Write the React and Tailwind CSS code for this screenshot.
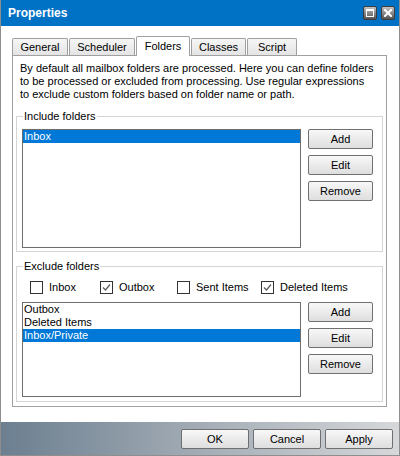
import React from 'react';

const tabs = [
  { name: "General", w: "w-[56px]" },
  { name: "Scheduler", w: "w-[66px]" },
  { name: "Folders", w: "w-[54px]", active: true },
  { name: "Classes", w: "w-[55px]" },
  { name: "Script", w: "w-[50px]" },
];

function Btn({ children, className = "" }) {
  return (
    <button className={`h-[20px] border border-[#707070] rounded-[2px] bg-linear-to-b from-[#f8f8f8] to-[#dedede] text-[11px] leading-none text-black ${className}`}>
      {children}
    </button>
  );
}

function TitleButton({ kind }) {
  return (
    <div className="w-[14px] h-[14px] rounded-[2px] border border-[#3c3c3c] bg-linear-to-b from-[#c4c4c4] via-[#8a8a8a] to-[#555555] flex items-center justify-center">
      {kind === "max" ? (
        <svg width="8" height="8" viewBox="0 0 8 8">
          <rect x="0.5" y="0.5" width="7" height="7" fill="none" stroke="white" strokeWidth="1" />
          <rect x="0" y="0" width="8" height="2" fill="white" />
        </svg>
      ) : (
        <svg width="8" height="8" viewBox="0 0 8 8">
          <path d="M1 1 L7 7 M7 1 L1 7" stroke="white" strokeWidth="2" strokeLinecap="square" />
        </svg>
      )}
    </div>
  );
}

function Check({ checked, label, className = "" }) {
  return (
    <div className={`flex items-center gap-[6px] ${className}`}>
      <span className="w-[13px] h-[13px] border border-[#333333] bg-white flex items-center justify-center">
        {checked && (
          <svg width="11" height="11" viewBox="0 0 11 11">
            <path d="M2 5.5 L4.5 8 L9 2.5" fill="none" stroke="#5a5a5a" strokeWidth="1.2" />
          </svg>
        )}
      </span>
      <span className="leading-[13px]">{label}</span>
    </div>
  );
}

function ListBox({ items, selected, className = "" }) {
  return (
    <div className={`w-[279px] border border-[#6e6e6e] bg-white ${className}`}>
      {items.map((it) => (
        <div
          key={it}
          className={`h-[13px] leading-[13px] pl-[1px] ${it === selected ? "bg-[#0078d7] text-white" : "text-black"}`}
        >
          {it}
        </div>
      ))}
    </div>
  );
}

function Group({ title, className = "", children }) {
  return (
    <div className={`relative mx-[3px] border border-[#d5d5d5] ${className}`}>
      <span className="absolute left-[6px] top-[-7px] bg-white px-[1px] leading-[13px]">{title}</span>
      {children}
    </div>
  );
}

function SideButtons() {
  return (
    <div className="flex flex-col gap-[6px]">
      <Btn className="w-[65px]">Add</Btn>
      <Btn className="w-[65px]">Edit</Btn>
      <Btn className="w-[65px]">Remove</Btn>
    </div>
  );
}

export default function App() {
  return (
    <div className="w-[400px] h-[456px] flex flex-col bg-white border-x border-b border-[#8e8e8e] font-['Liberation_Sans',Arial,sans-serif] text-[11px] text-black">
      <div className="h-[26px] shrink-0 bg-[#0072c6] flex items-center justify-between pl-[7px] pr-[4px]">
        <span className="text-white font-bold text-[12px]">Properties</span>
        <div className="flex gap-[4px]">
          <TitleButton kind="max" />
          <TitleButton kind="close" />
        </div>
      </div>

      <div className="flex-1 pl-[11px] pr-[12px] pt-[10px]">
        <div className="flex items-end gap-[1px] h-[19px]">
          {tabs.map((t) =>
            t.active ? (
              <div
                key={t.name}
                className={`${t.w} h-[20px] -mb-[1px] relative z-10 bg-white border-x border-t border-[#a0a0a0] rounded-t-[2px] flex items-center justify-center pb-[1px]`}
              >
                {t.name}
              </div>
            ) : (
              <div
                key={t.name}
                className={`${t.w} h-[17px] bg-linear-to-b from-[#f6f6f6] to-[#e4e4e4] border-x border-t border-[#a0a0a0] rounded-t-[2px] flex items-center justify-center`}
              >
                {t.name}
              </div>
            )
          )}
        </div>

        <div className="w-[375px] h-[352px] border border-[#a0a0a0] bg-white">
          <p className="pl-[7px] pt-[6px] leading-[13px] whitespace-nowrap">
            By default all mailbox folders are processed. Here you can define folders<br />
            to be processed or excluded from processing. Use regular expressions<br />
            to exclude custom folders based on folder name or path.
          </p>

          <Group title="Include folders" className="mt-[15px] h-[136px]">
            <div className="flex gap-[7px] pl-[5px] pt-[12px]">
              <ListBox items={["Inbox"]} selected="Inbox" className="h-[119px]" />
              <SideButtons />
            </div>
          </Group>

          <Group title="Exclude folders" className="mt-[14px] h-[136px]">
            <div className="pl-[5px] pt-[14px]">
              <div className="flex items-center ml-[8px] h-[13px]">
                <Check label="Inbox" className="w-[70px]" />
                <Check label="Outbox" checked className="w-[77px]" />
                <Check label="Sent Items" className="w-[84px]" />
                <Check label="Deleted Items" checked />
              </div>
              <div className="flex gap-[7px] mt-[8px]">
                <ListBox items={["Outbox", "Deleted Items", "Inbox/Private"]} selected="Inbox/Private" className="h-[95px]" />
                <SideButtons />
              </div>
            </div>
          </Group>
        </div>
      </div>

      <div className="h-[33px] shrink-0 bg-linear-to-r from-[#6c7f90] via-[#a3acb5] to-[#d6d8da] flex justify-end gap-[4px] pt-[7px] pr-[6px]">
        <Btn className="w-[68px]">OK</Btn>
        <Btn className="w-[68px]">Cancel</Btn>
        <Btn className="w-[68px]">Apply</Btn>
      </div>
    </div>
  );
}
